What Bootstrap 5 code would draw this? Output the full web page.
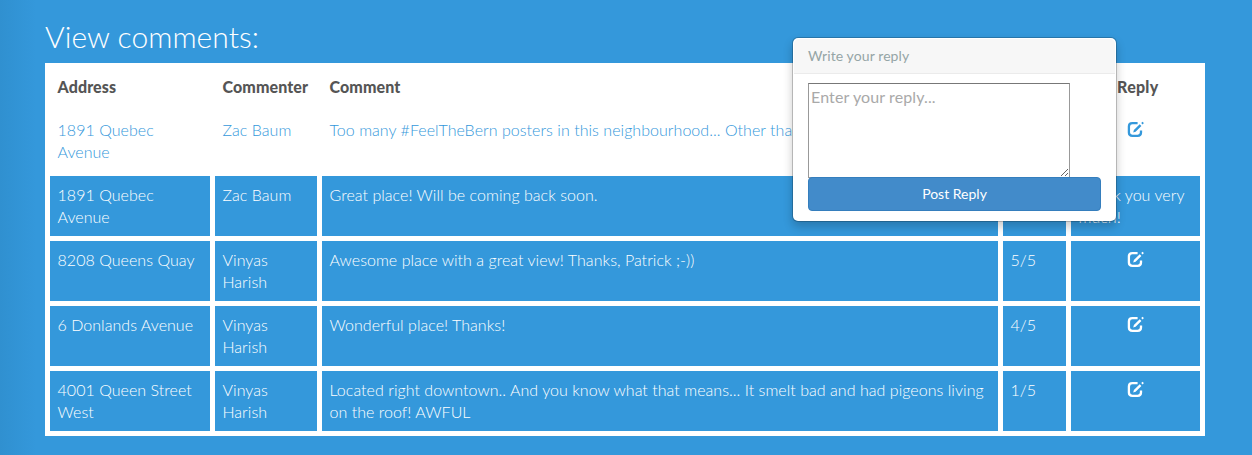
<!DOCTYPE html>
<html lang="en">
<head>
<meta charset="utf-8">
<meta name="viewport" content="width=device-width, initial-scale=1">
<title>View comments</title>
<link href="https://cdn.jsdelivr.net/npm/bootstrap@5.3.0/dist/css/bootstrap.min.css" rel="stylesheet">
<style>
body{background:linear-gradient(90deg,#3090d0 0,#3498db 36px) #3498db;font-family:Lato,sans-serif;font-size:16px;font-weight:300;line-height:22px;color:#fff;height:455px;overflow:hidden}
.page-wrap{padding:20px 47px 0 45px}
h1{font-size:30px;font-weight:300;line-height:33px;margin:0 0 10px;letter-spacing:.04px}
.comments{width:1160px;table-layout:fixed;border-collapse:separate;border-spacing:5px;background:#fff;letter-spacing:.04px}
.comments th,.comments td{padding:8px 7.5px}
.comments th{color:#555;font-weight:900;letter-spacing:.1px}
.comments th:last-child{padding-left:12px;letter-spacing:.25px}
.comments td{background:#3498db}
.comments tr.active-row td{background:#fff;color:#3498db}
.comments svg{display:block;margin:0 auto;width:17px;height:17px;position:relative;top:2px}
.reply-pop{left:792px;top:37px;width:325px;max-width:none;height:185px;padding:1px;border:1px solid rgba(0,0,0,.2);border-radius:6px;box-shadow:0 5px 10px rgba(0,0,0,.2);background-clip:padding-box;font-family:Lato,sans-serif;font-weight:400}
.reply-pop .popover-header{font-size:14px;font-weight:400;line-height:18px;padding:8px 14px;color:#95a5a6;background:#f7f7f7;border-bottom:1px solid #ebebeb;border-radius:5px 5px 0 0;letter-spacing:.1px}
.reply-pop .popover-body{padding:9px 14px;font-size:14px}
.reply-pop textarea{display:block;width:262px;height:95px;border:1px solid #999;border-top-color:#777;border-radius:0;padding:2px;font-size:16px;line-height:22px;letter-spacing:.12px;resize:both;outline:0;background:#fff}
.reply-pop textarea::placeholder{color:#a9a9a9}
.reply-pop .btn{margin-top:-1px;height:34px;font-size:14px;line-height:20px;padding:6px 12px;border-radius:4px;background:#428bca;border-color:#357ebd;color:#fff}
</style>
</head>
<body>
<svg class="d-none"><symbol id="edit" viewBox="0 0 17 17"><path d="M10.6 2.1H5.4Q1.9 2.1 1.9 5.4v6.2q0 3.3 3.5 3.3h5.2q3.4 0 3.4-3.3V9.4" fill="none" stroke="currentColor" stroke-width="2.3"/><path d="M6.2 11.6l.7-2.5 5.8-5.8 1.7 1.7-5.8 5.8zM14.2 2l1.3-1.3 1.4 1.4-1.3 1.3z" fill="currentColor"/></symbol></svg>
<main class="page-wrap">
<h1>View comments:</h1>
<table class="comments">
<colgroup><col style="width:160px"><col style="width:102px"><col style="width:676px"><col style="width:63px"><col style="width:129px"></colgroup>
<thead><tr><th>Address</th><th>Commenter</th><th>Comment</th><th>Rating</th><th class="text-center">Reply</th></tr></thead>
<tbody class="align-top">
<tr class="active-row"><td>1891 Quebec Avenue</td><td>Zac Baum</td><td class="text-nowrap">Too many #FeelTheBern posters in this neighbourhood... Other than that, good!</td><td>4/5</td><td><svg><use href="#edit"/></svg></td></tr>
<tr><td>1891 Quebec Avenue</td><td>Zac Baum</td><td>Great place! Will be coming back soon.</td><td>5/5</td><td>Thank you very much!</td></tr>
<tr><td>8208 Queens Quay</td><td>Vinyas Harish</td><td>Awesome place with a great view! Thanks, Patrick ;-))</td><td>5/5</td><td><svg><use href="#edit"/></svg></td></tr>
<tr><td>6 Donlands Avenue</td><td>Vinyas Harish</td><td>Wonderful place! Thanks!</td><td>4/5</td><td><svg><use href="#edit"/></svg></td></tr>
<tr><td>4001 Queen Street West</td><td>Vinyas Harish</td><td>Located right downtown.. And you know what that means... It smelt bad and had pigeons living on the roof! AWFUL</td><td>1/5</td><td><svg><use href="#edit"/></svg></td></tr>
</tbody>
</table>
</main>
<div class="popover reply-pop position-absolute" role="dialog">
<h3 class="popover-header">Write your reply</h3>
<div class="popover-body"><textarea placeholder="Enter your reply..."></textarea><button class="btn d-block w-100 position-relative" type="button">Post Reply</button></div>
</div>
<script src="https://cdn.jsdelivr.net/npm/bootstrap@5.3.0/dist/js/bootstrap.bundle.min.js"></script>
</body>
</html>
